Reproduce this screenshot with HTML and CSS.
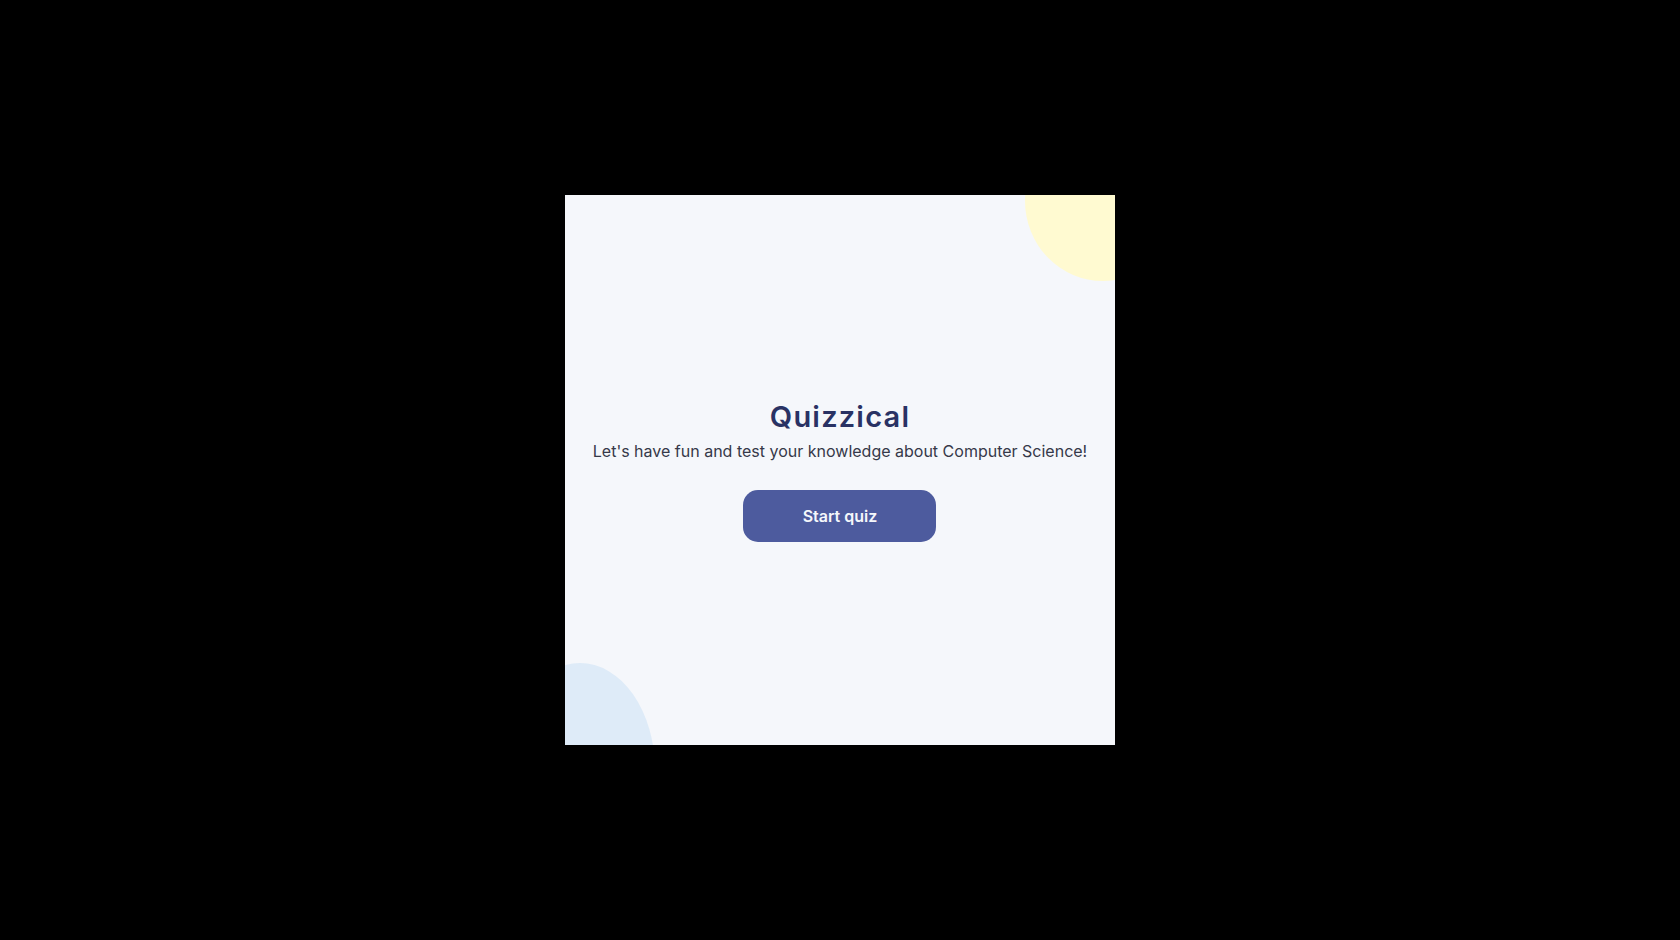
FILE: index.html
```html
<!DOCTYPE html>
<html lang="en">
<head>
<meta charset="utf-8">
<title>Quizzical</title>
<link rel="stylesheet" href="styles.css">
</head>
<body>
<main class="card">
  <div class="blob blob-yellow"></div>
  <div class="blob blob-blue"></div>
  <section class="intro">
    <h1 class="title">Quizzical</h1>
    <p class="subtitle">Let's have fun and test your knowledge about Computer Science!</p>
    <button class="start-btn" type="button">Start quiz</button>
  </section>
</main>
</body>
</html>
```

FILE: styles.css
```css
html, body {
  margin: 0;
  padding: 0;
  height: 100%;
}
body {
  background: #000;
  display: flex;
  align-items: center;
  justify-content: center;
  font-family: Inter, "Noto Sans", sans-serif;
}
.card {
  position: relative;
  width: 550px;
  height: 550px;
  background: #F5F7FB;
  overflow: hidden;
  display: flex;
  align-items: center;
  justify-content: center;
}
.blob {
  position: absolute;
  border-radius: 50%;
}
.blob-yellow {
  width: 156px;
  height: 160px;
  left: 460px;
  top: -74px;
  background: #FFFAD1;
}
.blob-blue {
  width: 150px;
  height: 214px;
  left: -60px;
  top: 468px;
  background: #DEEBF8;
}
.intro {
  position: relative;
  display: flex;
  flex-direction: column;
  align-items: center;
  text-align: center;
}
.title {
  margin: 0 0 7px;
  font-size: 29px;
  line-height: 36px;
  font-weight: 600;
  letter-spacing: 1.2px;
  color: #293264;
}
.subtitle {
  margin: 0 0 29px;
  font-size: 16px;
  line-height: 19px;
  color: #363949;
}
.start-btn {
  width: 193px;
  height: 52px;
  border: none;
  border-radius: 15px;
  background: #4D5B9E;
  color: #F5F7FB;
  font-family: Inter, "Noto Sans", sans-serif;
  font-size: 16px;
  font-weight: 600;
  cursor: pointer;
}
```
